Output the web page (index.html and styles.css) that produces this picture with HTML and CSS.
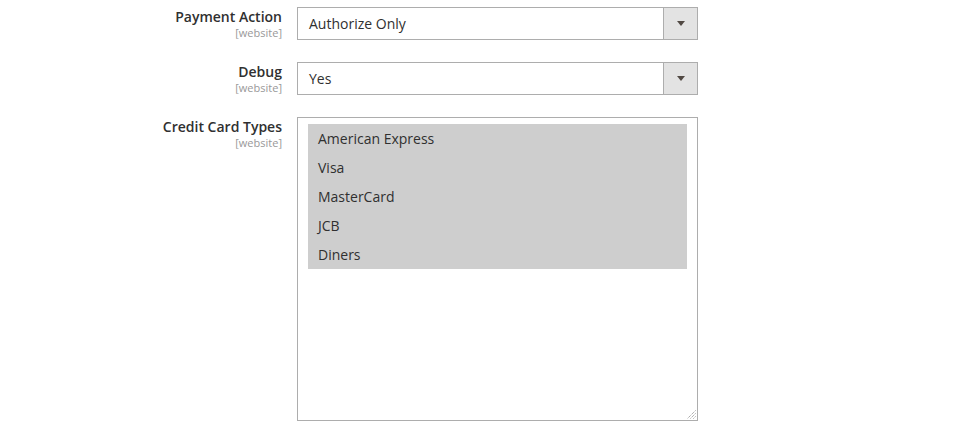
FILE: index.html
```html
<!DOCTYPE html>
<html lang="en">
<head>
<meta charset="utf-8">
<title>Payment settings</title>
<link rel="stylesheet" href="styles.css">
</head>
<body>
<form class="config">
  <div class="label">
    <span class="label-text">Payment Action</span>
    <span class="scope">[website]</span>
  </div>
  <div class="select">
    <span class="select-value">Authorize Only</span>
    <span class="select-arrow"><span class="tri"></span></span>
  </div>

  <div class="label">
    <span class="label-text">Debug</span>
    <span class="scope">[website]</span>
  </div>
  <div class="select">
    <span class="select-value">Yes</span>
    <span class="select-arrow"><span class="tri"></span></span>
  </div>

  <div class="label">
    <span class="label-text">Credit Card Types</span>
    <span class="scope">[website]</span>
  </div>
  <div class="multiselect" role="listbox" aria-multiselectable="true">
    <div class="option selected">American Express</div>
    <div class="option selected">Visa</div>
    <div class="option selected">MasterCard</div>
    <div class="option selected">JCB</div>
    <div class="option selected">Diners</div>
    <svg class="grip" width="9" height="9" viewBox="0 0 9 9">
      <path d="M8.5 0.5 L0.5 8.5 M8.5 3.5 L3.5 8.5 M8.5 6.5 L6.5 8.5" stroke="#8a8a8a" stroke-width="1" stroke-dasharray="1 1" fill="none"/>
    </svg>
  </div>
</form>
</body>
</html>
```
FILE: styles.css
```css
* { box-sizing: border-box; }
html, body { margin: 0; background: #fff; }
body {
  font-family: "Open Sans", "DejaVu Sans", sans-serif;
  color: #303030;
  width: 965px;
  height: 434px;
  overflow: hidden;
}
.config {
  display: grid;
  grid-template-columns: 282px 401px;
  column-gap: 15px;
  row-gap: 22px;
  padding-top: 7px;
  align-items: start;
}
.label {
  display: flex;
  flex-direction: column;
  align-items: flex-end;
  padding-top: 1px;
}
.label-text {
  font-size: 14px;
  font-weight: 600;
  line-height: 18px;
  color: #303030;
}
.scope {
  font-size: 11px;
  line-height: 13px;
  color: #999;
}
.select {
  display: flex;
  height: 33px;
  border: 1px solid #adadad;
  background: #fff;
}
.select-value {
  flex: 1;
  font-size: 14px;
  line-height: 31px;
  padding-left: 11px;
}
.select-arrow {
  width: 34px;
  border-left: 1px solid #adadad;
  background: #e3e3e3;
  display: flex;
  align-items: center;
  justify-content: center;
}
.tri {
  width: 0;
  height: 0;
  border-left: 4px solid transparent;
  border-right: 4px solid transparent;
  border-top: 5px solid #514943;
}
.multiselect {
  position: relative;
  height: 304px;
  border: 1px solid #adadad;
  padding: 6px 10px;
  background: #fff;
}
.option {
  font-size: 14px;
  line-height: 19px;
  padding: 5px 10px;
  height: 29px;
}
.option.selected { background: #cecece; }
.grip {
  position: absolute;
  right: 1px;
  bottom: 1px;
}
```
